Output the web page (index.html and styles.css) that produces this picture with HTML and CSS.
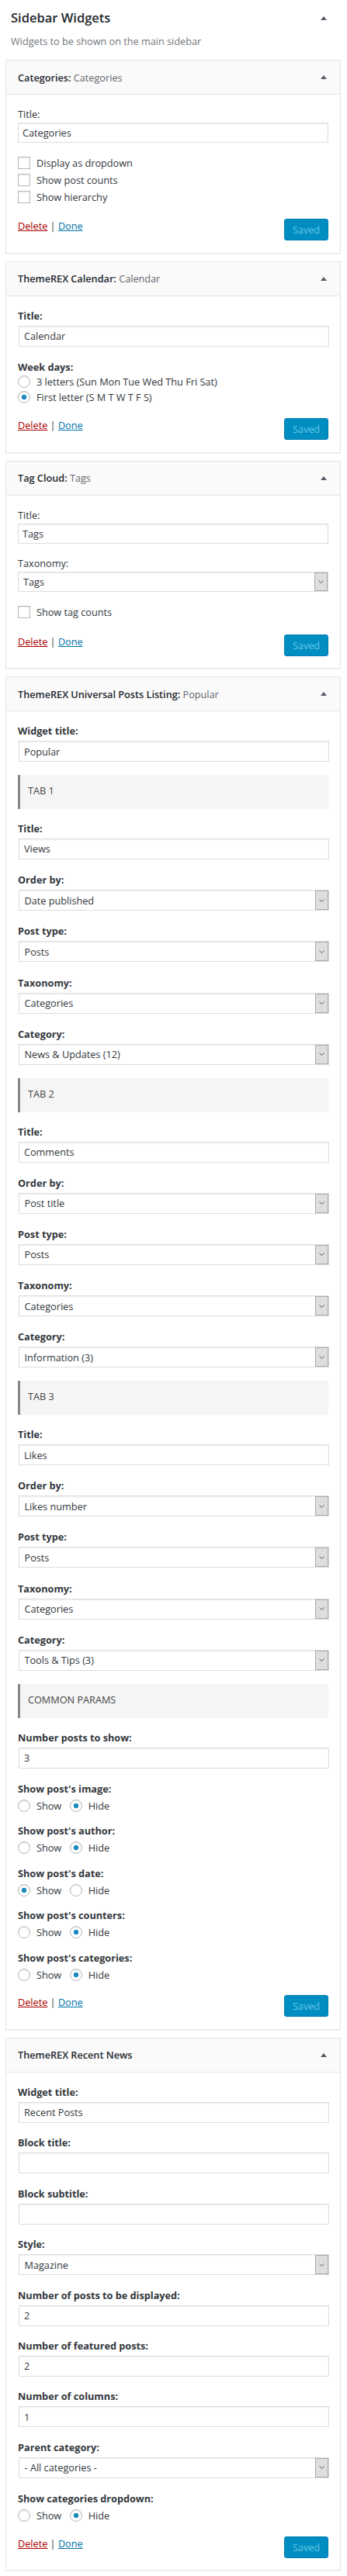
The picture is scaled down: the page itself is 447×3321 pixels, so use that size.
FILE: index.html
```html
<!DOCTYPE html>
<html lang="en">
<head>
<meta charset="utf-8">
<title>Sidebar Widgets</title>
<link rel="stylesheet" href="styles.css">
</head>
<body>
<div class="sidebar">
  <div class="sidebar-head">
    <h2 class="sidebar-title">Sidebar Widgets</h2>
    <span class="toggle"></span>
  </div>
  <p class="sidebar-desc">Widgets to be shown on the main sidebar</p>

  <!-- Categories -->
  <div class="widget core">
    <div class="widget-top">
      <h3 class="widget-title">Categories: <span class="in-title">Categories</span></h3>
      <span class="toggle"></span>
    </div>
    <div class="widget-inside">
      <div class="field">
        <label>Title:</label>
        <input class="text" type="text" value="Categories">
      </div>
      <div class="checks">
        <label class="check"><input type="checkbox">Display as dropdown</label>
        <label class="check"><input type="checkbox">Show post counts</label>
        <label class="check"><input type="checkbox">Show hierarchy</label>
      </div>
      <div class="actions">
        <span class="links"><a class="delete" href="#">Delete</a> | <a class="done" href="#">Done</a></span>
        <button class="saved" type="button">Saved</button>
      </div>
    </div>
  </div>

  <!-- Calendar -->
  <div class="widget trx">
    <div class="widget-top">
      <h3 class="widget-title">ThemeREX Calendar: <span class="in-title">Calendar</span></h3>
      <span class="toggle"></span>
    </div>
    <div class="widget-inside">
      <div class="field">
        <label>Title:</label>
        <input class="text" type="text" value="Calendar">
      </div>
      <div class="daylist">
        <span class="rlabel">Week days:</span>
        <label class="radio vrow"><input type="radio" name="wd">3 letters (Sun Mon Tue Wed Thu Fri Sat)</label>
        <label class="radio vrow"><input type="radio" name="wd" checked>First letter (S M T W T F S)</label>
      </div>
      <div class="actions">
        <span class="links"><a class="delete" href="#">Delete</a> | <a class="done" href="#">Done</a></span>
        <button class="saved" type="button">Saved</button>
      </div>
    </div>
  </div>

  <!-- Tag Cloud -->
  <div class="widget core">
    <div class="widget-top">
      <h3 class="widget-title">Tag Cloud: <span class="in-title">Tags</span></h3>
      <span class="toggle"></span>
    </div>
    <div class="widget-inside">
      <div class="field">
        <label>Title:</label>
        <input class="text" type="text" value="Tags">
      </div>
      <div class="field">
        <label>Taxonomy:</label>
        <div class="select"><span class="select-value">Tags</span><span class="select-btn"><svg width="7" height="4" viewBox="0 0 7 4"><path d="M0.5 0.5 L3.5 3.5 L6.5 0.5" fill="none" stroke="#555" stroke-width="1"/></svg></span></div>
      </div>
      <div class="checks">
        <label class="check"><input type="checkbox">Show tag counts</label>
      </div>
      <div class="actions">
        <span class="links"><a class="delete" href="#">Delete</a> | <a class="done" href="#">Done</a></span>
        <button class="saved" type="button">Saved</button>
      </div>
    </div>
  </div>

  <!-- Universal Posts Listing -->
  <div class="widget trx">
    <div class="widget-top">
      <h3 class="widget-title">ThemeREX Universal Posts Listing: <span class="in-title">Popular</span></h3>
      <span class="toggle"></span>
    </div>
    <div class="widget-inside">
      <div class="field">
        <label>Widget title:</label>
        <input class="text" type="text" value="Popular">
      </div>

      <div class="tabhead">TAB 1</div>
      <div class="field"><label>Title:</label><input class="text" type="text" value="Views"></div>
      <div class="field"><label>Order by:</label><div class="select"><span class="select-value">Date published</span><span class="select-btn"><svg width="7" height="4" viewBox="0 0 7 4"><path d="M0.5 0.5 L3.5 3.5 L6.5 0.5" fill="none" stroke="#555" stroke-width="1"/></svg></span></div></div>
      <div class="field"><label>Post type:</label><div class="select"><span class="select-value">Posts</span><span class="select-btn"><svg width="7" height="4" viewBox="0 0 7 4"><path d="M0.5 0.5 L3.5 3.5 L6.5 0.5" fill="none" stroke="#555" stroke-width="1"/></svg></span></div></div>
      <div class="field"><label>Taxonomy:</label><div class="select"><span class="select-value">Categories</span><span class="select-btn"><svg width="7" height="4" viewBox="0 0 7 4"><path d="M0.5 0.5 L3.5 3.5 L6.5 0.5" fill="none" stroke="#555" stroke-width="1"/></svg></span></div></div>
      <div class="field"><label>Category:</label><div class="select"><span class="select-value">News &amp; Updates (12)</span><span class="select-btn"><svg width="7" height="4" viewBox="0 0 7 4"><path d="M0.5 0.5 L3.5 3.5 L6.5 0.5" fill="none" stroke="#555" stroke-width="1"/></svg></span></div></div>

      <div class="tabhead">TAB 2</div>
      <div class="field"><label>Title:</label><input class="text" type="text" value="Comments"></div>
      <div class="field"><label>Order by:</label><div class="select"><span class="select-value">Post title</span><span class="select-btn"><svg width="7" height="4" viewBox="0 0 7 4"><path d="M0.5 0.5 L3.5 3.5 L6.5 0.5" fill="none" stroke="#555" stroke-width="1"/></svg></span></div></div>
      <div class="field"><label>Post type:</label><div class="select"><span class="select-value">Posts</span><span class="select-btn"><svg width="7" height="4" viewBox="0 0 7 4"><path d="M0.5 0.5 L3.5 3.5 L6.5 0.5" fill="none" stroke="#555" stroke-width="1"/></svg></span></div></div>
      <div class="field"><label>Taxonomy:</label><div class="select"><span class="select-value">Categories</span><span class="select-btn"><svg width="7" height="4" viewBox="0 0 7 4"><path d="M0.5 0.5 L3.5 3.5 L6.5 0.5" fill="none" stroke="#555" stroke-width="1"/></svg></span></div></div>
      <div class="field"><label>Category:</label><div class="select"><span class="select-value">Information (3)</span><span class="select-btn"><svg width="7" height="4" viewBox="0 0 7 4"><path d="M0.5 0.5 L3.5 3.5 L6.5 0.5" fill="none" stroke="#555" stroke-width="1"/></svg></span></div></div>

      <div class="tabhead">TAB 3</div>
      <div class="field"><label>Title:</label><input class="text" type="text" value="Likes"></div>
      <div class="field"><label>Order by:</label><div class="select"><span class="select-value">Likes number</span><span class="select-btn"><svg width="7" height="4" viewBox="0 0 7 4"><path d="M0.5 0.5 L3.5 3.5 L6.5 0.5" fill="none" stroke="#555" stroke-width="1"/></svg></span></div></div>
      <div class="field"><label>Post type:</label><div class="select"><span class="select-value">Posts</span><span class="select-btn"><svg width="7" height="4" viewBox="0 0 7 4"><path d="M0.5 0.5 L3.5 3.5 L6.5 0.5" fill="none" stroke="#555" stroke-width="1"/></svg></span></div></div>
      <div class="field"><label>Taxonomy:</label><div class="select"><span class="select-value">Categories</span><span class="select-btn"><svg width="7" height="4" viewBox="0 0 7 4"><path d="M0.5 0.5 L3.5 3.5 L6.5 0.5" fill="none" stroke="#555" stroke-width="1"/></svg></span></div></div>
      <div class="field"><label>Category:</label><div class="select"><span class="select-value">Tools &amp; Tips (3)</span><span class="select-btn"><svg width="7" height="4" viewBox="0 0 7 4"><path d="M0.5 0.5 L3.5 3.5 L6.5 0.5" fill="none" stroke="#555" stroke-width="1"/></svg></span></div></div>

      <div class="tabhead">COMMON PARAMS</div>
      <div class="field"><label>Number posts to show:</label><input class="text" type="text" value="3"></div>

      <div class="rgroup">
        <span class="rlabel">Show post's image:</span>
        <div class="radios"><label class="radio"><input type="radio" name="img">Show</label><label class="radio"><input type="radio" name="img" checked>Hide</label></div>
      </div>
      <div class="rgroup">
        <span class="rlabel">Show post's author:</span>
        <div class="radios"><label class="radio"><input type="radio" name="aut">Show</label><label class="radio"><input type="radio" name="aut" checked>Hide</label></div>
      </div>
      <div class="rgroup">
        <span class="rlabel">Show post's date:</span>
        <div class="radios"><label class="radio"><input type="radio" name="dat" checked>Show</label><label class="radio"><input type="radio" name="dat">Hide</label></div>
      </div>
      <div class="rgroup">
        <span class="rlabel">Show post's counters:</span>
        <div class="radios"><label class="radio"><input type="radio" name="cnt">Show</label><label class="radio"><input type="radio" name="cnt" checked>Hide</label></div>
      </div>
      <div class="rgroup">
        <span class="rlabel">Show post's categories:</span>
        <div class="radios"><label class="radio"><input type="radio" name="cat">Show</label><label class="radio"><input type="radio" name="cat" checked>Hide</label></div>
      </div>

      <div class="actions">
        <span class="links"><a class="delete" href="#">Delete</a> | <a class="done" href="#">Done</a></span>
        <button class="saved" type="button">Saved</button>
      </div>
    </div>
  </div>

  <!-- Recent News -->
  <div class="widget trx w5">
    <div class="widget-top">
      <h3 class="widget-title">ThemeREX Recent News</h3>
      <span class="toggle"></span>
    </div>
    <div class="widget-inside">
      <div class="field"><label>Widget title:</label><input class="text" type="text" value="Recent Posts"></div>
      <div class="field"><label>Block title:</label><input class="text" type="text" value=""></div>
      <div class="field"><label>Block subtitle:</label><input class="text" type="text" value=""></div>
      <div class="field"><label>Style:</label><div class="select"><span class="select-value">Magazine</span><span class="select-btn"><svg width="7" height="4" viewBox="0 0 7 4"><path d="M0.5 0.5 L3.5 3.5 L6.5 0.5" fill="none" stroke="#555" stroke-width="1"/></svg></span></div></div>
      <div class="field"><label>Number of posts to be displayed:</label><input class="text" type="text" value="2"></div>
      <div class="field"><label>Number of featured posts:</label><input class="text" type="text" value="2"></div>
      <div class="field"><label>Number of columns:</label><input class="text" type="text" value="1"></div>
      <div class="field"><label>Parent category:</label><div class="select"><span class="select-value">- All categories -</span><span class="select-btn"><svg width="7" height="4" viewBox="0 0 7 4"><path d="M0.5 0.5 L3.5 3.5 L6.5 0.5" fill="none" stroke="#555" stroke-width="1"/></svg></span></div></div>
      <div class="rgroup">
        <span class="rlabel">Show categories dropdown:</span>
        <div class="radios"><label class="radio"><input type="radio" name="cd">Show</label><label class="radio"><input type="radio" name="cd" checked>Hide</label></div>
      </div>
      <div class="actions">
        <span class="links"><a class="delete" href="#">Delete</a> | <a class="done" href="#">Done</a></span>
        <button class="saved" type="button">Saved</button>
      </div>
    </div>
  </div>
</div>
</body>
</html>
```

FILE: styles.css
```css
* { box-sizing: border-box; }
html, body { margin: 0; padding: 0; background: #fff; }
body {
  font-family: "Open Sans", "Noto Sans", Arial, sans-serif;
  font-size: 12.7px;
  line-height: 18px;
  color: #32373c;
}

.sidebar { padding: 0 8px 6px 7px; }

.sidebar-head {
  display: flex;
  align-items: center;
  justify-content: space-between;
  padding: 10px 18px 0 7px;
}
.sidebar-title {
  margin: 0;
  font-size: 16.5px;
  font-weight: 600;
  line-height: 26px;
  color: #23282d;
}
.toggle {
  width: 0;
  height: 0;
  border-left: 4px solid transparent;
  border-right: 4px solid transparent;
  border-bottom: 5px solid #555d66;
}
.sidebar-desc {
  margin: 8px 0 15px 7px;
  line-height: 18px;
  color: #72777c;
}

.widget {
  border: 1px solid #e5e5e5;
  background: #fff;
  box-shadow: 0 1px 1px rgba(0, 0, 0, .04);
  margin-bottom: 10px;
}
.widget:last-child { margin-bottom: 0; }
.widget-top {
  display: flex;
  align-items: center;
  justify-content: space-between;
  height: 44px;
  padding: 0 17px 0 15px;
  background: #fafafa;
  border-bottom: 1px solid #e5e5e5;
}
.widget-title {
  margin: 0;
  font-size: 12.7px;
  font-weight: 600;
  line-height: 18px;
  color: #23282d;
}
.in-title { font-weight: 400; color: #5f676f; }

.widget-inside { padding: 16px 15px 15.5px; }

.field label { display: block; line-height: 18px; }
.rlabel { display: block; line-height: 18px; }

.text {
  display: block;
  width: 100%;
  margin: 0;
  padding: 0 5px;
  border: 1px solid #ddd;
  box-shadow: inset 0 1px 2px rgba(0, 0, 0, .07);
  background: #fff;
  font: inherit;
  color: #32373c;
  outline: none;
}
.select {
  display: flex;
  width: 100%;
  border: 1px solid #ddd;
  box-shadow: inset 0 1px 2px rgba(0, 0, 0, .07);
  background: #fff;
  color: #32373c;
}
.select-value { flex: 1; align-self: center; padding-left: 6px; }
.select-btn {
  width: 17px;
  border: 1px solid #ababab;
  background: #dedede;
  display: flex;
  align-items: center;
  justify-content: center;
}

/* core widgets */
.core .field label { margin-bottom: 2px; }
.core .text, .core .select { height: 26px; }
.core .field + .field { margin-top: 16px; }

/* ThemeREX widgets */
.trx .field label, .trx .rlabel { font-weight: 700; color: #32373c; }
.trx .field label { margin-bottom: 4px; }
.trx .text, .trx .select { height: 27px; margin-left: 1px; }
.trx .text { padding-left: 6px; }
.trx .select-value { padding-left: 6.5px; }
.trx .field + .field, .trx .field + .tabhead { margin-top: 17.2px; }
.trx .tabhead + .field { margin-top: 15.6px; }
.w5 .field + .field { margin-top: 16.4px; }

.tabhead {
  display: flex;
  align-items: center;
  height: 44px;
  padding: 0 0 4px 10px;
  background: #f5f5f5;
  border-left: 3px solid #888;
  color: #444;
}

/* checkboxes */
.checks { margin-top: 15.5px; }
.check { display: flex; align-items: center; height: 21.8px; }
input[type=checkbox], input[type=radio] {
  -webkit-appearance: none;
  appearance: none;
  width: 16px;
  height: 16px;
  margin: 0 8px 0 0;
  border: 1px solid #b4b9be;
  background: #fff;
  box-shadow: inset 0 1px 2px rgba(0, 0, 0, .1);
  flex: none;
}
input[type=radio] { border-radius: 50%; }
input[type=radio]:checked {
  background: radial-gradient(circle, #1e8cbe 0, #1e8cbe 3px, #fff 3.6px);
}

/* radios */
.daylist { margin-top: 17px; }
.radio { display: flex; align-items: center; }
.vrow { height: 20px; }
.rgroup { margin-top: 17.4px; }
.rgroup + .rgroup { margin-top: 14.5px; }
.w5 .rgroup { margin-top: 17.7px; }
.rgroup .rlabel { margin-bottom: 4px; }
.radios { display: flex; align-items: center; height: 18px; }
.radios .radio { margin-right: 10.5px; }

/* actions */
.actions {
  display: flex;
  justify-content: space-between;
  align-items: flex-start;
  margin-top: 17.5px;
}
.links { line-height: 19px; color: #32373c; }
.delete { color: #a00; text-decoration: underline; }
.done { color: #0073aa; text-decoration: underline; }
.saved {
  width: 57px;
  height: 28px;
  margin: 0;
  padding: 0;
  border: 1px solid #007cb2;
  border-radius: 3px;
  background: #008ec2;
  color: #66c6e4;
  font: inherit;
}
```
